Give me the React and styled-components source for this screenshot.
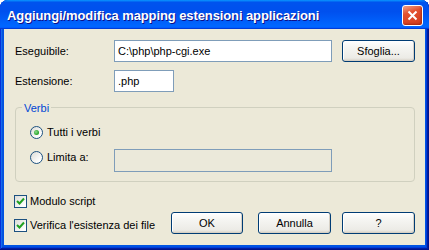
import React from 'react';
import styled, { createGlobalStyle } from 'styled-components';

const GlobalStyle = createGlobalStyle`
	html, body {
		margin: 0;
		padding: 0;
		background: #fff;
	}
	body {
		font-family: 'Liberation Sans', Arial, sans-serif;
		font-size: 11px;
		color: #000;
	}
`;

const Window = styled.div`
	width: 429px;
	height: 250px;
	box-sizing: border-box;
	display: flex;
	flex-direction: column;
	padding: 0 4px 5px;
	background: #0054e3;
	border-radius: 8px 8px 0 0;
	box-shadow: inset -1px -1px #00138c, inset 1px 1px #0831d9,
		inset -2px -2px #001ea0, inset 2px 2px #166aee, inset -3px -3px #003bda,
		inset 3px 3px #0855dd;
`;

const TitleBar = styled.div`
	height: 29px;
	margin: 0 -4px;
	padding: 0 6px 0 7px;
	display: flex;
	align-items: center;
	justify-content: space-between;
	border-radius: 8px 8px 0 0;
	background: linear-gradient(
		180deg,
		#0997ff,
		#0053ee 8%,
		#0050ee 40%,
		#06f 88%,
		#06f 93%,
		#005bff 95%,
		#003dd7 96%,
		#003dd7
	);
`;

const Title = styled.span`
	font-family: 'Liberation Sans', Arial, sans-serif;
	font-weight: bold;
	font-size: 13px;
	color: #fff;
	text-shadow: 1px 1px #0f1089;
	letter-spacing: -0.1px;
	padding-top: 1px;
`;

const CloseButton = styled.button`
	width: 21px;
	height: 21px;
	padding: 0;
	margin-top: 1px;
	border: 1px solid #fff;
	border-radius: 3px;
	display: flex;
	align-items: center;
	justify-content: center;
	background: linear-gradient(160deg, #f0a48a 0%, #e4512f 35%, #cf3a1c 100%);
	box-shadow: inset -1px -1px 2px rgba(120, 20, 0, 0.5);
`;

const Body = styled.div`
	flex: 1;
	background: #ece9d8;
	padding: 11px 10px 0 11px;
	display: flex;
	flex-direction: column;
`;

const FieldRow = styled.div`
	display: grid;
	grid-template-columns: 99px ${(p) => p.$edit}px auto;
	align-items: center;
	height: 22px;
	margin-top: ${(p) => p.$top || 0}px;
`;

const Label = styled.label`
	line-height: 13px;
	white-space: nowrap;
`;

const Edit = styled.div`
	box-sizing: border-box;
	height: ${(p) => p.$h || 22}px;
	width: ${(p) => p.$w}px;
	border: 1px solid #7f9db9;
	background: ${(p) => (p.disabled ? '#ebe9da' : '#fff')};
	padding: 0 3px;
	display: flex;
	align-items: center;
	line-height: 13px;
	white-space: nowrap;
`;

const Button = styled.button`
	box-sizing: border-box;
	width: ${(p) => p.$w || 73}px;
	height: 22px;
	padding: 0;
	margin-left: ${(p) => p.$ml || 0}px;
	font-family: 'Liberation Sans', Arial, sans-serif;
	font-size: 11px;
	color: #000;
	border: 1px solid #003c74;
	border-radius: 3px;
	background: linear-gradient(180deg, #fff, #f6f6f3 30%, #ecebe6 85%, #d6d0c5);
	box-shadow: inset -1px -1px #d6d0c5, inset 1px 1px #fff;
`;

const Group = styled.fieldset`
	margin: 7px 0 0;
	padding: 0 0 9px 14px;
	min-width: 0;
	border: 1px solid #d0d0bf;
	border-radius: 4px;
	display: flex;
	flex-direction: column;
`;

const Legend = styled.legend`
	color: #0046d5;
	line-height: 13px;
	padding: 3px 2px 0;
	margin-left: -8px;
`;

const RadioRow = styled.div`
	display: grid;
	grid-template-columns: 84px auto;
	align-items: start;
	margin-top: ${(p) => p.$top}px;
`;

const Choice = styled.label`
	display: flex;
	align-items: center;
	gap: ${(p) => p.$gap || 4}px;
	height: 16px;
	line-height: 13px;
	white-space: nowrap;
`;

const RadioDot = styled.span`
	box-sizing: border-box;
	width: 13px;
	height: 13px;
	border-radius: 50%;
	border: 1px solid #1c5180;
	background: linear-gradient(135deg, #dcdcd6 0%, #fff 80%);
	display: flex;
	align-items: center;
	justify-content: center;

	&::after {
		content: '';
		display: ${(p) => (p.$on ? 'block' : 'none')};
		width: 5px;
		height: 5px;
		border-radius: 50%;
		background: radial-gradient(circle at 40% 40%, #8edc8e, #21a121 70%);
	}
`;

const CheckBox = styled.span`
	box-sizing: border-box;
	width: 13px;
	height: 13px;
	border: 1px solid #1c5180;
	background: linear-gradient(135deg, #dcdcd7 0%, #fff 85%);
	display: flex;
	align-items: center;
	justify-content: center;
`;

const Footer = styled.div`
	display: flex;
	align-items: flex-end;
	margin-top: 11px;
`;

const Checks = styled.div`
	flex: 1;
	display: flex;
	flex-direction: column;
	gap: 8px;
	margin-left: -1px;
	padding-bottom: 1px;
`;

const Buttons = styled.div`
	display: flex;
`;

function Tick() {
	return (
		<svg width="9" height="9" viewBox="0 0 9 9">
			<path d="M1 4 L3.5 6.5 L8 1.5" stroke="#21a121" strokeWidth="2" fill="none" />
		</svg>
	);
}

export default function App() {
	return (
		<>
			<GlobalStyle />
			<Window>
				<TitleBar>
					<Title>Aggiungi/modifica mapping estensioni applicazioni</Title>
					<CloseButton aria-label="Chiudi">
						<svg width="11" height="11" viewBox="0 0 11 11">
							<path d="M1.5 1.5 L9.5 9.5 M9.5 1.5 L1.5 9.5" stroke="#fff" strokeWidth="2" />
						</svg>
					</CloseButton>
				</TitleBar>
				<Body>
					<FieldRow $edit={218}>
						<Label>Eseguibile:</Label>
						<Edit $w={218}>C:\php\php-cgi.exe</Edit>
						<Button $ml={10}>Sfoglia...</Button>
					</FieldRow>
					<FieldRow $edit={218} $top={8}>
						<Label>Estensione:</Label>
						<Edit $w={60}>.php</Edit>
					</FieldRow>
					<Group>
						<Legend>Verbi</Legend>
						<RadioRow $top={9}>
							<Choice>
								<RadioDot $on />
								Tutti i verbi
							</Choice>
						</RadioRow>
						<RadioRow $top={9}>
							<Choice>
								<RadioDot />
								Limita a:
							</Choice>
							<Edit $w={218} $h={23} disabled />
						</RadioRow>
					</Group>
					<Footer>
						<Checks>
							<Choice $gap={3}>
								<CheckBox>
									<Tick />
								</CheckBox>
								Modulo script
							</Choice>
							<Choice $gap={3}>
								<CheckBox>
									<Tick />
								</CheckBox>
								Verifica l'esistenza dei file
							</Choice>
						</Checks>
						<Buttons>
							<Button $w={72}>OK</Button>
							<Button $ml={15}>Annulla</Button>
							<Button $ml={11}>?</Button>
						</Buttons>
					</Footer>
				</Body>
			</Window>
		</>
	);
}
